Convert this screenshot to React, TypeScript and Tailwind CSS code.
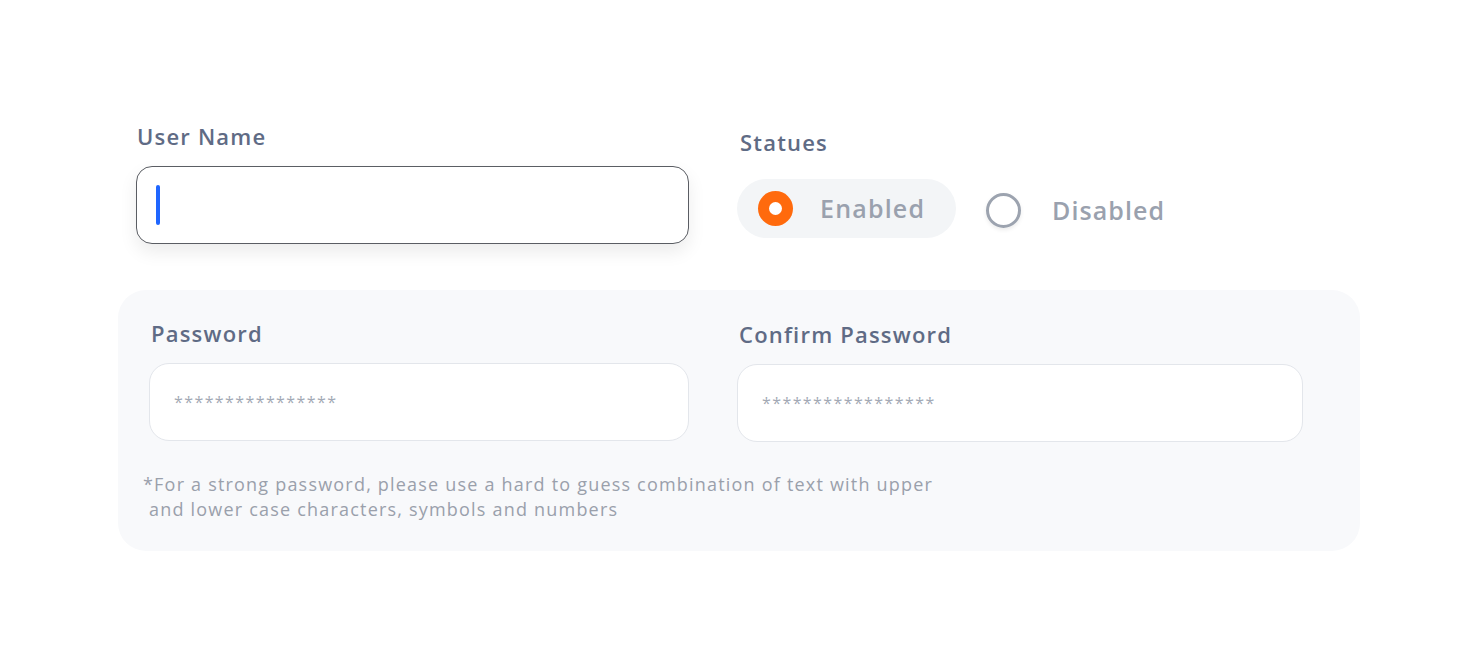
import React from 'react';

const font = { fontFamily: '"Open Sans", Lato, sans-serif' };

function Field({ label, value }: { label: string; value: string }) {
  return (
    <div className="flex flex-col">
      <label className="pl-[2px] text-[22px] leading-7 font-semibold tracking-[1.2px] text-[#5f6b85]">{label}</label>
      <div className="mt-[16px] flex h-[78px] items-center rounded-[20px] border border-[#e3e6eb] bg-white px-6">
        <span className="text-[16px] tracking-[1.4px] text-[#a3a9b5]">{value}</span>
      </div>
    </div>
  );
}

export default function App() {
  return (
    <div className="min-h-[660px] w-full bg-white" style={font}>
      <div className="pt-[122px] pl-[136px]">
        {/* Top row */}
        <div className="flex gap-[48px]">
          <div className="flex w-[553px] flex-col">
            <label className="pl-[1px] text-[22px] leading-7 font-semibold tracking-[1.2px] text-[#5f6b85]">User Name</label>
            <div className="mt-[16px] flex h-[78px] items-center rounded-[16px] border border-[#5a5d63] bg-white px-[19px] shadow-[0_8px_18px_rgba(0,0,0,0.08)]">
              <span className="h-[40px] w-[4px] rounded-full bg-[#1f66ff]" />
            </div>
          </div>

          <div className="flex flex-col pt-[6px]">
            <label className="pl-[3px] text-[22px] leading-7 font-semibold tracking-[1.2px] text-[#5f6b85]">Statues</label>
            <div className="mt-[23px] flex items-center">
              <div className="flex h-[59px] w-[219px] items-center rounded-full bg-[#f3f5f7] pl-[21px]">
                <span className="flex h-[35px] w-[35px] items-center justify-center rounded-full bg-[#ff6a0d]">
                  <span className="h-[13px] w-[13px] rounded-full bg-white" />
                </span>
                <span className="ml-[27px] text-[25px] font-semibold tracking-[1.2px] text-[#9aa1ae]">Enabled</span>
              </div>
              <div className="ml-[30px] flex items-center pt-[4px]">
                <span className="h-[35px] w-[35px] rounded-full border-[3px] border-[#9ca3af] shadow-[0_2px_4px_rgba(0,0,0,0.08)]" />
                <span className="ml-[31px] text-[25px] font-semibold tracking-[1.1px] text-[#9aa1ae]">Disabled</span>
              </div>
            </div>
          </div>
        </div>
      </div>

      {/* Password panel */}
      <div className="mt-[46px] ml-[118px] w-[1242px] rounded-[28px] bg-[#f8f9fb] pt-[29px] pb-[29px] pl-[31px]">
        <div className="flex gap-[48px]">
          <div className="w-[540px]">
            <Field label="Password" value="****************" />
          </div>
          <div className="w-[566px] pt-[1px]">
            <Field label="Confirm Password" value="*****************" />
          </div>
        </div>
        <div className="mt-[30px] -ml-[6px] text-[18px] leading-[25px] tracking-[1.2px] text-[#9aa0ab]">
          <p>*For a strong password, please use a hard to guess combination of text with upper</p>
          <p className="ml-[6px]">and lower case characters, symbols and numbers</p>
        </div>
      </div>
    </div>
  );
}
